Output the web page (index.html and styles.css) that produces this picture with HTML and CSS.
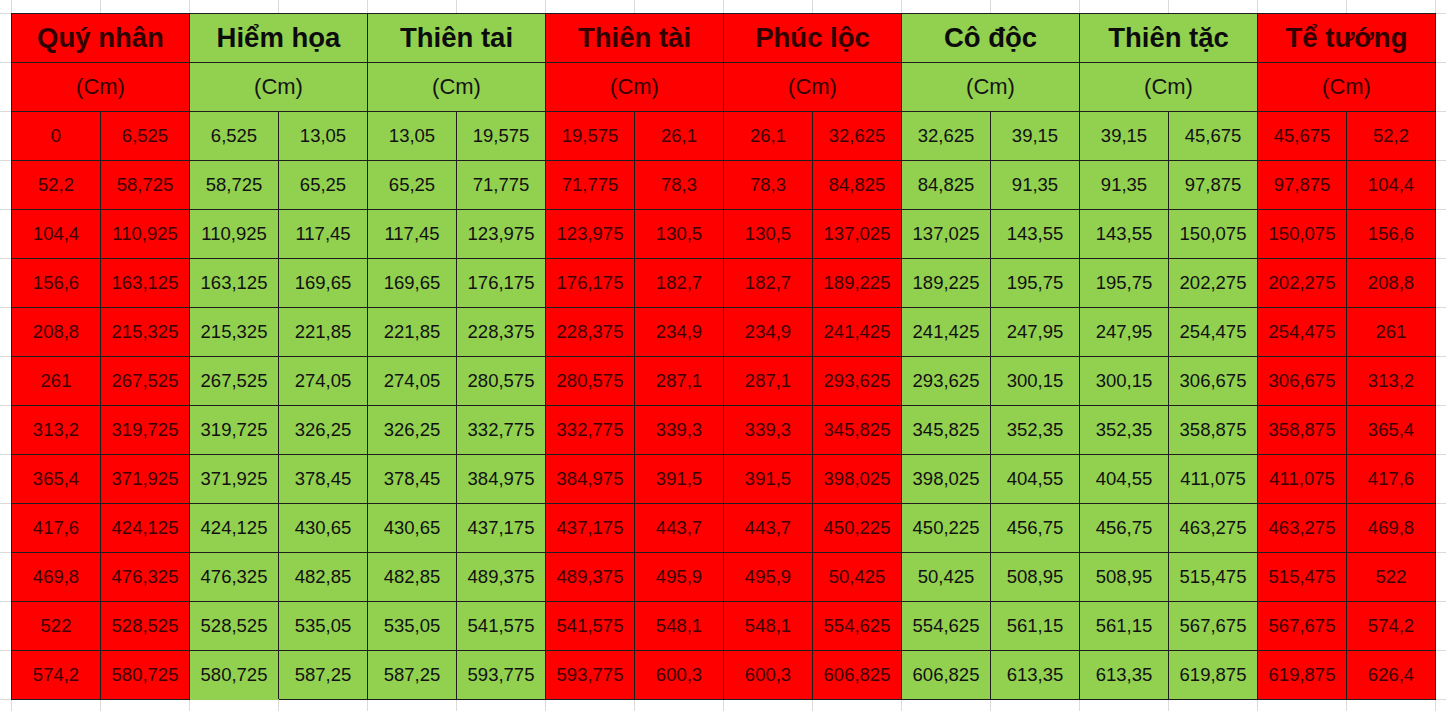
FILE: index.html
```html
<!DOCTYPE html>
<html lang="vi">
<head>
<meta charset="utf-8">
<title>Bảng kích thước</title>
<link rel="stylesheet" href="styles.css">
</head>
<body>
<table class="sheet">
<thead>
<tr class="title">
<th colspan="2">Quý nhân</th><th colspan="2">Hiểm họa</th><th colspan="2">Thiên tai</th><th colspan="2">Thiên tài</th><th colspan="2">Phúc lộc</th><th colspan="2">Cô độc</th><th colspan="2">Thiên tặc</th><th colspan="2">Tể tướng</th>
</tr>
<tr class="unit">
<th colspan="2">(Cm)</th><th colspan="2">(Cm)</th><th colspan="2">(Cm)</th><th colspan="2">(Cm)</th><th colspan="2">(Cm)</th><th colspan="2">(Cm)</th><th colspan="2">(Cm)</th><th colspan="2">(Cm)</th>
</tr>
</thead>
<tbody>
<tr><td>0</td><td>6,525</td><td>6,525</td><td>13,05</td><td>13,05</td><td>19,575</td><td>19,575</td><td>26,1</td><td>26,1</td><td>32,625</td><td>32,625</td><td>39,15</td><td>39,15</td><td>45,675</td><td>45,675</td><td>52,2</td></tr>
<tr><td>52,2</td><td>58,725</td><td>58,725</td><td>65,25</td><td>65,25</td><td>71,775</td><td>71,775</td><td>78,3</td><td>78,3</td><td>84,825</td><td>84,825</td><td>91,35</td><td>91,35</td><td>97,875</td><td>97,875</td><td>104,4</td></tr>
<tr><td>104,4</td><td>110,925</td><td>110,925</td><td>117,45</td><td>117,45</td><td>123,975</td><td>123,975</td><td>130,5</td><td>130,5</td><td>137,025</td><td>137,025</td><td>143,55</td><td>143,55</td><td>150,075</td><td>150,075</td><td>156,6</td></tr>
<tr><td>156,6</td><td>163,125</td><td>163,125</td><td>169,65</td><td>169,65</td><td>176,175</td><td>176,175</td><td>182,7</td><td>182,7</td><td>189,225</td><td>189,225</td><td>195,75</td><td>195,75</td><td>202,275</td><td>202,275</td><td>208,8</td></tr>
<tr><td>208,8</td><td>215,325</td><td>215,325</td><td>221,85</td><td>221,85</td><td>228,375</td><td>228,375</td><td>234,9</td><td>234,9</td><td>241,425</td><td>241,425</td><td>247,95</td><td>247,95</td><td>254,475</td><td>254,475</td><td>261</td></tr>
<tr><td>261</td><td>267,525</td><td>267,525</td><td>274,05</td><td>274,05</td><td>280,575</td><td>280,575</td><td>287,1</td><td>287,1</td><td>293,625</td><td>293,625</td><td>300,15</td><td>300,15</td><td>306,675</td><td>306,675</td><td>313,2</td></tr>
<tr><td>313,2</td><td>319,725</td><td>319,725</td><td>326,25</td><td>326,25</td><td>332,775</td><td>332,775</td><td>339,3</td><td>339,3</td><td>345,825</td><td>345,825</td><td>352,35</td><td>352,35</td><td>358,875</td><td>358,875</td><td>365,4</td></tr>
<tr><td>365,4</td><td>371,925</td><td>371,925</td><td>378,45</td><td>378,45</td><td>384,975</td><td>384,975</td><td>391,5</td><td>391,5</td><td>398,025</td><td>398,025</td><td>404,55</td><td>404,55</td><td>411,075</td><td>411,075</td><td>417,6</td></tr>
<tr><td>417,6</td><td>424,125</td><td>424,125</td><td>430,65</td><td>430,65</td><td>437,175</td><td>437,175</td><td>443,7</td><td>443,7</td><td>450,225</td><td>450,225</td><td>456,75</td><td>456,75</td><td>463,275</td><td>463,275</td><td>469,8</td></tr>
<tr><td>469,8</td><td>476,325</td><td>476,325</td><td>482,85</td><td>482,85</td><td>489,375</td><td>489,375</td><td>495,9</td><td>495,9</td><td>50,425</td><td>50,425</td><td>508,95</td><td>508,95</td><td>515,475</td><td>515,475</td><td>522</td></tr>
<tr><td>522</td><td>528,525</td><td>528,525</td><td>535,05</td><td>535,05</td><td>541,575</td><td>541,575</td><td>548,1</td><td>548,1</td><td>554,625</td><td>554,625</td><td>561,15</td><td>561,15</td><td>567,675</td><td>567,675</td><td>574,2</td></tr>
<tr><td>574,2</td><td>580,725</td><td class="open">580,725</td><td>587,25</td><td>587,25</td><td>593,775</td><td>593,775</td><td>600,3</td><td>600,3</td><td>606,825</td><td>606,825</td><td>613,35</td><td>613,35</td><td>619,875</td><td>619,875</td><td>626,4</td></tr>
</tbody>
</table>
</body>
</html>
```
FILE: styles.css
```css
html, body {
  margin: 0;
  padding: 0;
}
body {
  width: 1446px;
  height: 711px;
  overflow: hidden;
  background-color: #ffffff;
  background-image:
    linear-gradient(to right, #dadada 1px, transparent 1px),
    linear-gradient(to bottom, #dadada 1px, transparent 1px);
  background-size: 89px 100%, 100% 49px;
  background-position: 11px 0, 0 13px;
  font-family: "Liberation Sans", Arial, sans-serif;
}
.sheet {
  margin: 13px 0 0 11px;
  width: 1425px;
  table-layout: fixed;
  border-collapse: collapse;
}
.sheet th,
.sheet td {
  height: 48px;
  padding: 0;
  border: 1px solid #1e1e1e;
  text-align: center;
  vertical-align: middle;
  white-space: nowrap;
  overflow: visible;
}
.sheet .title th {
  font-size: 27.5px;
  font-weight: bold;
  color: #0c0c0c;
}
.sheet .unit th {
  font-size: 22px;
  font-weight: normal;
  color: #141414;
}
.sheet td {
  font-size: 18.5px;
  color: #111111;
}
/* column groups: red / green */
.sheet thead th {
  background: #92d050;
}
.sheet thead th:nth-child(1),
.sheet thead th:nth-child(4),
.sheet thead th:nth-child(5),
.sheet thead th:nth-child(8) {
  background: #ff0000;
  color: #330000;
}
.sheet tbody td {
  background: #92d050;
}
.sheet tbody td:nth-child(1),
.sheet tbody td:nth-child(2),
.sheet tbody td:nth-child(7),
.sheet tbody td:nth-child(8),
.sheet tbody td:nth-child(9),
.sheet tbody td:nth-child(10),
.sheet tbody td:nth-child(15),
.sheet tbody td:nth-child(16) {
  background: #ff0000;
  color: #3c0000;
}
.sheet tbody td.open {
  border-bottom-color: #92d050;
}
```
